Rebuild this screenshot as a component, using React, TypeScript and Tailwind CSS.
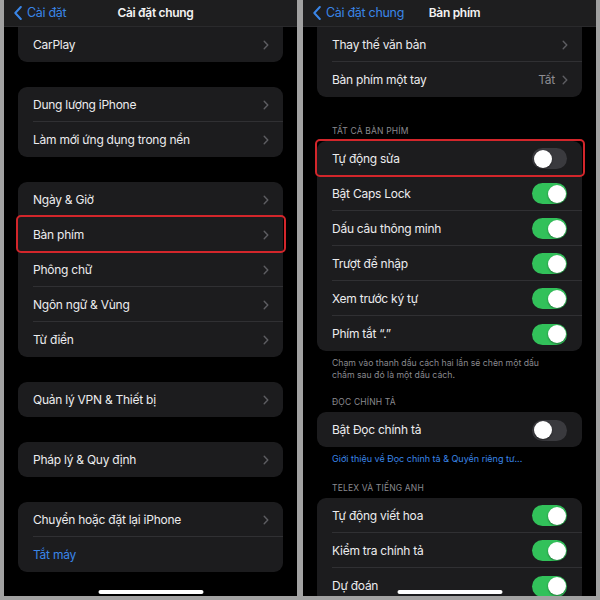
import React from 'react';

type Row = {
  label: string;
  kind?: 'chevron' | 'on' | 'off' | 'link';
  value?: string;
  highlight?: boolean;
};

const leftGroups: Row[][] = [
  [{ label: 'CarPlay' }],
  [{ label: 'Dung lượng iPhone' }, { label: 'Làm mới ứng dụng trong nền' }],
  [
    { label: 'Ngày & Giờ' },
    { label: 'Bàn phím', highlight: true },
    { label: 'Phông chữ' },
    { label: 'Ngôn ngữ & Vùng' },
    { label: 'Từ điển' },
  ],
  [{ label: 'Quản lý VPN & Thiết bị' }],
  [{ label: 'Pháp lý & Quy định' }],
  [{ label: 'Chuyển hoặc đặt lại iPhone' }, { label: 'Tắt máy', kind: 'link' }],
];

const Chevron = () => (
  <svg width="6" height="10" viewBox="0 0 6 10" className="shrink-0">
    <path
      d="M1.2 1.2L4.8 5L1.2 8.8"
      stroke="#5d5d62"
      strokeWidth="1.4"
      fill="none"
      strokeLinecap="round"
      strokeLinejoin="round"
    />
  </svg>
);

const BackChevron = () => (
  <svg width="8" height="14" viewBox="0 0 8 14" className="shrink-0">
    <path
      d="M6.8 1L1.3 7L6.8 13"
      stroke="#3a86e8"
      strokeWidth="2"
      fill="none"
      strokeLinecap="round"
      strokeLinejoin="round"
    />
  </svg>
);

const Toggle = ({ on }: { on: boolean }) => (
  <div
    className={`flex h-[21px] w-[35px] shrink-0 items-center rounded-full px-[1.5px] ${
      on ? 'justify-end bg-[#32c15a]' : 'justify-start bg-[#3a3a3e]'
    }`}
  >
    <div className="h-[18px] w-[18px] rounded-full bg-white shadow-[0_1px_2px_rgba(0,0,0,0.4)]" />
  </div>
);

const Card = ({ rows, flatTop }: { rows: Row[]; flatTop?: boolean }) => (
  <div
    className={`mx-[14px] bg-[#1c1c1e] ${flatTop ? 'rounded-b-[9px]' : 'rounded-[9px]'}`}
  >
    {rows.map((row, i) => {
      const last = i === rows.length - 1;
      const toggle = row.kind === 'on' || row.kind === 'off';
      return (
        <div key={i} className="relative flex h-[35px] pl-[15px]">
          <div
            className={`flex flex-1 items-center justify-between pt-px ${
              toggle ? 'pr-[15px]' : 'pr-[14px]'
            } ${last ? '' : 'border-b border-[#303033]'}`}
          >
            <span
              className={`text-[12px] tracking-[-0.25px] ${
                row.kind === 'link' ? 'text-[#3a86e8]' : 'text-[#ececee]'
              }`}
            >
              {row.label}
            </span>
            {toggle ? (
              <Toggle on={row.kind === 'on'} />
            ) : row.kind === 'link' ? null : (
              <div className="flex items-center gap-[7px]">
                {row.value && (
                  <span className="text-[12px] tracking-[-0.25px] text-[#8d8d92]">
                    {row.value}
                  </span>
                )}
                <Chevron />
              </div>
            )}
          </div>
          {row.highlight && (
            <div className="pointer-events-none absolute -top-[2px] -bottom-[1px] -left-[2px] -right-[3px] rounded-[5px] border-2 border-[#d3262b]" />
          )}
        </div>
      );
    })}
  </div>
);

const NavBar = ({ back, title }: { back: string; title: string }) => (
  <div className="grid h-[27px] shrink-0 grid-cols-[1fr_auto_1fr] items-center border-b border-[#2a2a2c] bg-[#1e1e1f] pl-[10px]">
    <div className="flex items-center gap-[5px]">
      <BackChevron />
      <span className="text-[12.5px] tracking-[-0.3px] text-[#3a86e8]">{back}</span>
    </div>
    <span className="text-[12px] font-semibold tracking-[-0.3px] text-[#f2f2f2]">{title}</span>
    <div />
  </div>
);

const Header = ({ text, pt }: { text: string; pt: string }) => (
  <div className={`${pt} pb-[4px] pl-[29px] text-[8.5px] leading-[12px] tracking-[0.02em] text-[#8a8a8f]`}>
    {text}
  </div>
);

const HomeBar = () => (
  <div className="absolute bottom-[2px] left-1/2 h-[4px] w-[105px] -translate-x-1/2 rounded-full bg-white" />
);

export default function App() {
  return (
    <div
      className="flex h-[600px] w-[600px] gap-[6px] bg-[#a2a2a2] px-[4px] pb-[4px]"
      style={{ fontFamily: 'Inter, "Noto Sans", sans-serif' }}
    >
      {/* left: general settings */}
      <div className="relative flex flex-1 flex-col overflow-hidden bg-black">
        <NavBar back="Cài đặt" title="Cài đặt chung" />
        <div className="flex flex-col gap-[25px]">
          {leftGroups.map((g, i) => (
            <Card key={i} rows={g} flatTop={i === 0} />
          ))}
        </div>
        <HomeBar />
      </div>

      {/* right: keyboard settings */}
      <div className="relative flex flex-1 flex-col overflow-hidden bg-black">
        <NavBar back="Cài đặt chung" title="Bàn phím" />
        <Card
          flatTop
          rows={[
            { label: 'Thay thế văn bản' },
            { label: 'Bàn phím một tay', value: 'Tất' },
          ]}
        />
        <Header text="TẤT CẢ BÀN PHÍM" pt="pt-[28px]" />
        <Card
          rows={[
            { label: 'Tự động sửa', kind: 'off', highlight: true },
            { label: 'Bật Caps Lock', kind: 'on' },
            { label: 'Dấu câu thông minh', kind: 'on' },
            { label: 'Trượt để nhập', kind: 'on' },
            { label: 'Xem trước ký tự', kind: 'on' },
            { label: 'Phím tắt “.”', kind: 'on' },
          ]}
        />
        <p className="pt-[6px] pl-[29px] pr-[42px] text-[8.7px] leading-[12px] text-[#8a8a8f]">
          Chạm vào thanh dấu cách hai lần sẽ chèn một dấu chấm sau đó là một dấu cách.
        </p>
        <Header text="ĐỌC CHÍNH TẢ" pt="pt-[15px]" />
        <Card rows={[{ label: 'Bật Đọc chính tả', kind: 'off' }]} />
        <p className="pt-[6px] pl-[29px] text-[9px] leading-[12px] text-[#3a86e8]">
          Giới thiệu về Đọc chính tả &amp; Quyền riêng tư...
        </p>
        <Header text="TELEX VÀ TIẾNG ANH" pt="pt-[17px]" />
        <Card
          rows={[
            { label: 'Tự động viết hoa', kind: 'on' },
            { label: 'Kiểm tra chính tả', kind: 'on' },
            { label: 'Dự đoán', kind: 'on' },
          ]}
        />
        <HomeBar />
      </div>
    </div>
  );
}
